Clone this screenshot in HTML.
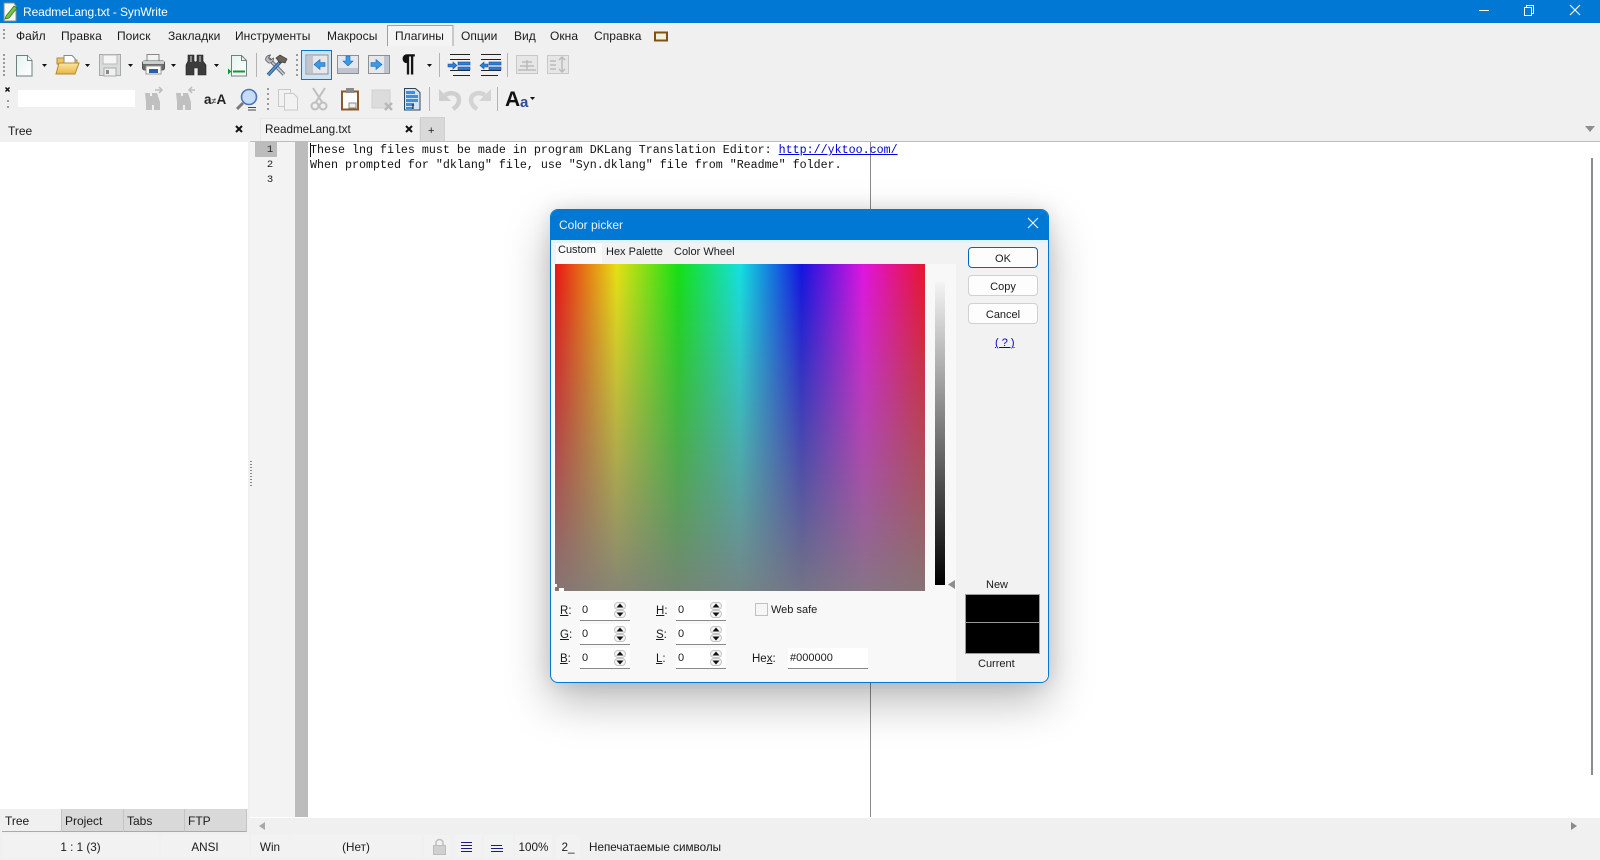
<!DOCTYPE html>
<html><head><meta charset="utf-8"><title>ReadmeLang.txt - SynWrite</title>
<style>
html,body{margin:0;padding:0;width:1600px;height:860px;overflow:hidden;background:#f0f0f0}
body{position:relative;font:12px "Liberation Sans",sans-serif;color:#1a1a1a}
.a{position:absolute;white-space:nowrap}
.b{position:absolute;box-sizing:border-box}
.m{top:29px;line-height:14px;font-size:12px;letter-spacing:.05px}
.ed{position:absolute;left:310px;font:11.67px/15px "Liberation Mono",monospace;color:#111;white-space:pre}
.ln{position:absolute;width:22px;text-align:center;left:259px;font:10.5px/14px "Liberation Mono",monospace;color:#222}
.s{position:absolute;top:835px;height:23px;line-height:25px;background:#f2f2f2;text-align:center;box-sizing:border-box;font-size:11.7px}
.t{position:absolute;top:809px;height:23px;line-height:24px;padding-left:3px;box-sizing:border-box;background:#d9d9d9;border-bottom:1px solid #aaa;border-right:1px solid #c4c4c4}
.fld{position:absolute;width:50px;height:21px;background:#fff;border-bottom:1px solid #8a8a8a;box-sizing:border-box;line-height:21px;padding-left:2px;font-size:11px}
.lb{position:absolute;font-size:11.5px;line-height:14px}
.tx{font-size:11px;line-height:14px}
.btn{position:absolute;left:968px;width:70px;height:21px;border:1px solid #d0d0d0;border-radius:4px;background:#fdfdfd;text-align:center;line-height:22px;box-sizing:border-box;font-size:11px}
u{text-decoration:underline}
</style></head><body>

<!-- title bar -->
<div class="b" style="left:0;top:0;width:1600px;height:23px;background:#0078d4"></div>
<svg class="a" style="left:0;top:0" width="1600" height="860" viewBox="0 0 1600 860" fill="none">
<defs>
<linearGradient id="gd" x1="0" y1="0" x2="1" y2="1"><stop offset="0" stop-color="#e5f3ef"/><stop offset="1" stop-color="#fff"/></linearGradient>
<linearGradient id="fo" x1="0" y1="0" x2="0" y2="1"><stop offset="0" stop-color="#fce8a0"/><stop offset="1" stop-color="#e8b448"/></linearGradient>
</defs>
<!-- app icon -->
<path d="M4 3h10l2 3v15H4z" fill="#fafafa" stroke="#8a8f80"/><path d="M6 16l8-10 3 2-8 10-4 1z" fill="#7cc243" stroke="#2f7a1f" stroke-width=".8"/>
<!-- window controls -->
<path d="M1479 10.500h10" stroke="#fff"/><path d="M1524.500 7.500h7v8h-7z" stroke="#fff"/><path d="M1526.500 7.500v-2h7v8h-2" stroke="#fff"/><path d="M1570 5l10 10M1580 5l-10 10" stroke="#fff" stroke-width="1.100"/>
<!-- grip dots -->
<g fill="#9a9a9a"><rect x="3" y="29" width="2" height="2"/><rect x="3" y="33" width="2" height="2"/><rect x="3" y="37" width="2" height="2"/>
<rect x="3" y="54" width="2" height="2"/><rect x="3" y="58" width="2" height="2"/><rect x="3" y="62" width="2" height="2"/><rect x="3" y="66" width="2" height="2"/><rect x="3" y="70" width="2" height="2"/><rect x="3" y="74" width="2" height="2"/>
<rect x="7" y="100" width="2" height="2"/><rect x="7" y="106" width="2" height="2"/>
<rect x="296" y="54" width="2" height="2"/><rect x="296" y="59" width="2" height="2"/><rect x="296" y="64" width="2" height="2"/><rect x="296" y="69" width="2" height="2"/><rect x="296" y="74" width="2" height="2"/>
<rect x="267" y="88" width="2" height="2"/><rect x="267" y="93" width="2" height="2"/><rect x="267" y="98" width="2" height="2"/><rect x="267" y="103" width="2" height="2"/><rect x="267" y="108" width="2" height="2"/></g>
<!-- menu box -->
<path d="M387.500 46v-20.500h65.500V46" stroke="#a0a0a0" fill="#f4f4f4"/>
<rect x="655" y="32.500" width="12" height="8" stroke="#7a5410" stroke-width="2" fill="#f5efe0"/>
<!-- dropdown arrows -->
<g fill="#111"><path d="M42 64h5l-2.500 3zM85 64h5l-2.500 3zM128 64h5l-2.500 3zM171 64h5l-2.500 3zM214 64h5l-2.500 3zM427 64h5l-2.500 3zM530 97h5l-2.500 3z"/></g>
<!-- new -->
<path d="M16.500 55.500h11l4.500 5v15.500h-15.500z" fill="url(#gd)" stroke="#6c8080"/><path d="M27.500 55.500v5h4.500" stroke="#6c8080" fill="#fff"/>
<!-- open -->
<path d="M57 58h9l2 2h9v4H57z" fill="#efc468" stroke="#b58a2c"/><path d="M64 55.500h8l3 3v8H64z" fill="#fff" stroke="#7a9090"/><path d="M59 63h20l-4 11H56z" fill="url(#fo)" stroke="#b58a2c"/>
<!-- save -->
<path d="M99.500 54.500h21v21h-21z" fill="#d8dcdc" stroke="#a8a8a8"/><rect x="103" y="55" width="14" height="9" fill="#f5f5f5" stroke="#bbb"/><rect x="104" y="68" width="12" height="8" fill="#f0f0f0" stroke="#aaa"/><rect x="106" y="70" width="3" height="4" fill="#888"/>
<!-- print -->
<rect x="147" y="54.500" width="12" height="7" fill="#f2f2f2" stroke="#888"/><rect x="142.500" y="61" width="22" height="9" rx="2" fill="#6a6a6a" stroke="#555"/><rect x="143" y="61" width="21" height="3" fill="#c8d0d0"/><rect x="146" y="66" width="15" height="8" fill="#fff" stroke="#999"/><rect x="149" y="69" width="9" height="4" fill="#2b5fa8"/>
<!-- binoculars -->
<path d="M188 55h6v6l1 1h1l1-1v-6h6v6l3 4v10h-8v-7h-4v7h-8V65l2-4z" fill="#3c3c3c" stroke="#222" stroke-width=".6"/><path d="M190 56h2v6h-2zM199 56h2v6h-2z" fill="#888"/>
<!-- goto doc -->
<path d="M231.500 55.500h10l5 5v15.500h-15z" fill="url(#gd)" stroke="#6c8080"/><path d="M241.500 55.500v5h5" stroke="#6c8080"/><path d="M233 71.500h12" stroke="#0e9a2c" stroke-width="2"/><path d="M228 68.500l3.500 3-3.500 3z" fill="#0e9a2c"/>
<path d="M256.500 53v24M439.500 53v24M507.500 53v24M429.500 87v24M497.500 87v24" stroke="#b4b4b4"/>
<!-- tools -->
<path d="M268.500 58.500l15.500 16" stroke="#5c6670" stroke-width="3.600"/><path d="M268.500 58.500l15.500 16" stroke="#c4c8cc" stroke-width="1.800"/><path d="M265.500 60c0-3 2-5 5-5l-2 3 2 2 3-2c.5 3-2 5.500-5 5z" fill="#b8bcc0" stroke="#555" stroke-width=".7"/>
<path d="M268 75l13-14" stroke="#2f5f98" stroke-width="3.600"/><path d="M268 75l13-14" stroke="#5f94cc" stroke-width="1.600"/><path d="M276 58l4-3 7 4-2 4-3-1-2 1z" fill="#6a6458" stroke="#333" stroke-width=".7"/>
<!-- active button -->
<rect x="301.500" y="50.500" width="30" height="29" fill="#cce4f7" stroke="#0078d4"/>
<!-- panel icons -->
<rect x="306" y="55" width="22" height="19" fill="#e4e8ec" stroke="#8f8f8f"/><rect x="307" y="56" width="6" height="17" fill="#c0c4d0"/><path d="M325 62.500h-5v-3l-6 5 6 5v-3h5z" fill="#3b9ae6" stroke="#1b65b0" stroke-width=".6"/>
<rect x="337.500" y="55.500" width="21" height="18" fill="#e4e8ec" stroke="#8f8f8f"/><rect x="338" y="68" width="20" height="5" fill="#c0c4d0"/><path d="M346 56h4v5h3l-5 5-5-5h3z" fill="#3b9ae6" stroke="#1b65b0" stroke-width=".6"/>
<rect x="368.500" y="55.500" width="21" height="18" fill="#e4e8ec" stroke="#8f8f8f"/><rect x="384" y="56" width="5" height="17" fill="#c0c4d0"/><path d="M371 62.500h5v-3l6 5-6 5v-3h-5z" fill="#3b9ae6" stroke="#1b65b0" stroke-width=".6"/>
<!-- indent -->
<g stroke="#222"><path d="M450 54.500h20M453 75.500h17M450 59.500h20M450 70.500h20"/><path d="M481 54.500h20M481 75.500h17M481 59.500h20M481 70.500h20"/></g>
<g fill="#2f7fd8" stroke="#1a4f9a" stroke-width=".6"><rect x="458" y="62" width="12" height="3"/><rect x="458" y="67" width="12" height="3"/><rect x="489" y="62" width="12" height="3"/><rect x="489" y="67" width="12" height="3"/><path d="M448 64h5v-2l4 3.500-4 3.500v-2h-5zM488 64h-4v-2l-4 3.500 4 3.500v-2h4z"/></g>
<!-- greyed -->
<g stroke="#c8c8c8" fill="#e6e6e6"><rect x="516.500" y="55.500" width="21" height="18"/><rect x="547.500" y="55.500" width="21" height="18"/></g>
<path d="M520 66h14M527 60v10M522 62h10M518 70h18" stroke="#bbb" stroke-width="1.500"/><path d="M550 61h6M550 65h6M550 69h6M562 57v15M559 60l3-3 3 3M559 69l3 3 3-3" stroke="#bbb" stroke-width="1.500"/>
<!-- row2 -->
<path d="M5.500 87.500l4 4M9.500 87.500l-4 4" stroke="#111" stroke-width="1.500"/>
<g fill="#c0c0c0"><path d="M145 93h5v3h2v-3h5l3 9v8h-6v-5h-2v5h-6v-8z"/><path d="M176 93h5v3h2v-3h5l3 9v8h-6v-5h-2v5h-6v-8z"/></g>
<path d="M155 90h6M159 87l3 3-3 3M189 90h6M192 87l-3 3 3 3" stroke="#bdbdbd" stroke-width="1.500"/>
<!-- magnifier -->
<circle cx="249" cy="97" r="7.500" fill="#c6dcf8" stroke="#4c74b4" stroke-width="1.600"/><path d="M243 103l-6 6" stroke="#7a7a7a" stroke-width="3"/><path d="M248 107.500h8M248 110h8" stroke="#444"/>
<!-- copy -->
<g stroke="#c8c8c8" fill="#f2f2f2"><rect x="278.500" y="89.500" width="12" height="17"/><path d="M284.500 93.500h9l4 4v12.500h-13z"/></g>
<!-- cut -->
<g stroke="#bfbfbf" stroke-width="2"><path d="M313 88l9 14M325 88l-9 14"/><circle cx="315" cy="106" r="3.500"/><circle cx="323" cy="106" r="3.500"/></g>
<!-- paste -->
<rect x="342" y="91.500" width="16" height="18" fill="#fff" stroke="#8a5a2a" stroke-width="2"/><rect x="346" y="88" width="8" height="5" fill="#8a8a8a"/><rect x="349" y="103" width="7" height="5" fill="#eee" stroke="#888"/>
<!-- delete -->
<rect x="372" y="90" width="18" height="18" fill="#dcdcdc" stroke="#d0d0d0"/><path d="M385 103l7 7M392 103l-7 7" stroke="#b8b8b8" stroke-width="2.500"/>
<!-- blue doc -->
<path d="M404.500 88.500h11l4.500 4v17.500h-15.500z" fill="#cfe4fa" stroke="#345"/><g fill="#3f8ee0"><rect x="406" y="91" width="9" height="3"/><rect x="406" y="95" width="12" height="3"/><rect x="406" y="99" width="12" height="3"/><rect x="406" y="103" width="8" height="3"/><rect x="406" y="107" width="7" height="2"/></g><path d="M413 104v5" stroke="#111"/>
<!-- undo redo -->
<g id="undo"><path d="M439 89v12h12z" fill="#cfcfcf"/><path d="M445 95c7-4 14-1 14 5 0 4-3 7-6 9" stroke="#cfcfcf" stroke-width="4.500"/></g>
<g transform="translate(930,0) scale(-1,1)"><path d="M439 89v12h12z" fill="#d4d4d4"/><path d="M445 95c7-4 14-1 14 5 0 4-3 7-6 9" stroke="#d4d4d4" stroke-width="4.500"/></g>
<!-- small arrows -->
<path d="M1585 126h10l-5 6z" fill="#8e8e8e"/>
</svg>

<!-- title -->
<div class="a" style="left:23px;top:5px;color:#fff;font-size:12px;line-height:14px;letter-spacing:-.1px">ReadmeLang.txt - SynWrite</div>

<!-- menu -->
<div class="a m" style="left:16px">Файл</div><div class="a m" style="left:61px">Правка</div><div class="a m" style="left:117px">Поиск</div><div class="a m" style="left:168px">Закладки</div><div class="a m" style="left:235px">Инструменты</div><div class="a m" style="left:327px">Макросы</div><div class="a m" style="left:395px">Плагины</div><div class="a m" style="left:461px">Опции</div><div class="a m" style="left:514px">Вид</div><div class="a m" style="left:550px">Окна</div><div class="a m" style="left:594px">Справка</div>

<!-- pilcrow etc -->
<div class="a" style="left:402px;top:51px;font:bold 24px/26px 'Liberation Sans',sans-serif;color:#111;-webkit-text-stroke:.5px #111">¶</div>
<div class="a" style="left:204px;top:92px;font:bold 13.500px/15px 'Liberation Sans',sans-serif;color:#222">a<span style="font-size:9px;font-weight:normal">≠</span>A</div>
<div class="a" style="left:505px;top:89px;font:bold 21px/22px 'Liberation Sans',sans-serif;color:#111">A</div>
<div class="a" style="left:520px;top:94px;font:bold 15px/17px 'Liberation Sans',sans-serif;color:#2b4a9a">a</div>
<div class="b" style="left:18px;top:90px;width:117px;height:17px;background:#fff"></div>

<!-- panel -->
<div class="b" style="left:3px;top:118px;width:245px;height:24px;background:#f0f0f0"></div>
<div class="a" style="left:8px;top:124px;line-height:14px">Tree</div>
<div class="b" style="left:0;top:142px;width:248px;height:667px;background:#fff"></div>

<!-- editor -->
<div class="b" style="left:250px;top:141px;width:1350px;height:677px;background:#fff;border-top:1px solid #bdbdbd"></div>
<div class="b" style="left:250px;top:142px;width:45px;height:675px;background:#f3f3f3"></div>
<div class="b" style="left:295px;top:142px;width:13px;height:675px;background:#bcbcbc"></div>
<div class="b" style="left:255px;top:142px;width:22px;height:15px;background:#bcbcbc"></div>
<div class="ln" style="top:143px">1</div><div class="ln" style="top:158px">2</div><div class="ln" style="top:173px">3</div>
<div class="b" style="left:870px;top:142px;width:1px;height:675px;background:#8a8a8a"></div>
<div class="b" style="left:1591px;top:158px;width:2px;height:617px;background:#8c8c8c"></div>
<div class="b" style="left:310px;top:143px;width:1px;height:14px;background:#111"></div>
<div class="ed" style="top:143px">These lng files must be made in program DKLang Translation Editor: <span style="color:#0000e0;text-decoration:underline">http://yktoo.com/</span>
When prompted for "dklang" file, use "Syn.dklang" file from "Readme" folder.</div>

<!-- tabs -->
<div class="b" style="left:260px;top:118px;width:160px;height:23px;background:#f2f2f2;border:1px solid #e8e8e8;border-bottom:0"></div>
<div class="b" style="left:420px;top:117px;width:25px;height:24px;background:#d9d9d9;border:1px solid #cfcfcf;border-bottom:0"></div>
<div class="a" style="left:265px;top:123px;line-height:14px;font-size:11.7px">ReadmeLang.txt</div>
<div class="a" style="left:428px;top:124px;line-height:14px;font-size:11px">+</div>
<svg class="a" style="left:0;top:0" width="1600" height="860"><path d="M406 126l6 6M412 126l-6 6M236 126l6 6M242 126l-6 6" stroke="#111" stroke-width="2"/></svg>

<!-- grip on splitter -->
<div class="b" style="left:250px;top:461px;width:2px;height:27px;background:repeating-linear-gradient(#888 0 1px,transparent 1px 3px)"></div>

<!-- bottom scrollbar -->
<div class="b" style="left:250px;top:818px;width:1350px;height:17px;background:#f0f0f0"></div>
<svg class="a" style="left:0;top:0" width="1600" height="860"><path d="M265 822v8l-6-4z" fill="#a8a8a8"/><path d="M1571 822v8l6-4z" fill="#8a8a8a"/></svg>

<!-- bottom tabs -->
<div class="t" style="left:2px;width:60px;background:#f0f0f0">Tree</div><div class="t" style="left:62px;width:62px">Project</div><div class="t" style="left:124px;width:61px">Tabs</div><div class="t" style="left:185px;width:62px">FTP</div>

<!-- status -->
<div class="s" style="left:2px;width:157px">1 : 1 (3)</div>
<div class="s" style="left:161px;width:88px">ANSI</div>
<div class="s" style="left:251px;width:38px">Win</div>
<div class="s" style="left:290px;width:132px">(Нет)</div>
<div class="s" style="left:424px;width:26px"></div>
<div class="s" style="left:455px;width:26px"></div>
<div class="s" style="left:484px;width:29px"></div>
<div class="s" style="left:515px;width:37px">100%</div>
<div class="s" style="left:556px;width:24px">2_</div>
<div class="s" style="left:584px;width:1016px;text-align:left;padding-left:5px;background:#f0f0f0">Непечатаемые символы</div>
<svg class="a" style="left:0;top:0" width="1600" height="860" fill="none"><rect x="433.500" y="845.500" width="12" height="9" fill="#d0d0d0" stroke="#bdbdbd"/><path d="M436 845v-2a3.500 3.500 0 017 0v2" stroke="#bdbdbd" stroke-width="1.500"/>
<path d="M461 842.500h11M461 845.500h11M461 848.500h11M461 851.500h11" stroke="#1a1a80"/><path d="M491 845.500h11M491 848.500h12M491 851.500h12" stroke="#1a1a80"/></svg>

<!-- dialog -->
<div class="b" style="left:550px;top:209px;width:499px;height:474px;background:#f8f8f8;border:1px solid #0078d4;border-radius:8px;box-shadow:0 18px 45px rgba(0,0,0,.28),0 0 18px rgba(0,0,0,.1);overflow:hidden">
<div class="b" style="left:0;top:0;width:497px;height:30px;background:#0078d4"></div>
<div class="b" style="left:0;top:30px;width:497px;height:3px;background:#dff2fd"></div>
<div class="b" style="left:0;top:33px;width:497px;height:21px;background:#f2f2f2"></div>
<div class="b" style="left:5px;top:33px;width:46px;height:21px;background:#fafafa"></div>
<div class="b" style="left:405px;top:33px;width:92px;height:440px;background:#f2f2f2"></div>
</div>
<div class="a" style="left:559px;top:218px;color:#eaf5ff;font-size:12px;line-height:14px">Color picker</div>
<svg class="a" style="left:0;top:0" width="1600" height="860" fill="none"><path d="M1028 218l10 10M1038 218l-10 10" stroke="#fff"/><path d="M955 580v9l-7-4.500z" fill="#8e8e8e"/></svg>
<div class="a tx" style="left:558px;top:243px">Custom</div>
<div class="a tx" style="left:606px;top:245px">Hex Palette</div>
<div class="a tx" style="left:674px;top:245px">Color Wheel</div>

<div class="b" style="left:555px;top:264px;width:370px;height:327px;background:linear-gradient(to bottom,rgba(125,125,125,0),rgba(125,125,125,.9)),linear-gradient(to right,#e81414 0,#e6e014 16.67%,#14e014 33.33%,#14e0e0 50%,#1414e0 66.67%,#e014e0 83.33%,#e81430 100%)"></div>
<div class="b" style="left:555px;top:584px;width:2px;height:3px;background:#fff"></div>
<div class="b" style="left:559px;top:588px;width:5px;height:3px;background:#fff"></div>
<div class="b" style="left:935px;top:282px;width:10px;height:303px;background:linear-gradient(#f4f4f4,#777 50%,#000)"></div>

<div class="lb" style="left:560px;top:604px"><u>R</u>:</div><div class="lb" style="left:560px;top:628px"><u>G</u>:</div><div class="lb" style="left:560px;top:652px"><u>B</u>:</div>
<div class="lb" style="left:656px;top:604px"><u>H</u>:</div><div class="lb" style="left:656px;top:628px"><u>S</u>:</div><div class="lb" style="left:656px;top:652px"><u>L</u>:</div>
<div class="fld" style="left:580px;top:600px">0</div><div class="fld" style="left:580px;top:624px">0</div><div class="fld" style="left:580px;top:648px">0</div>
<div class="fld" style="left:676px;top:600px">0</div><div class="fld" style="left:676px;top:624px">0</div><div class="fld" style="left:676px;top:648px">0</div>
<svg class="a" style="left:0;top:0" width="1600" height="860">
<defs><g id="sp"><rect x="614.500" y="602.500" width="11" height="7" rx="3.500" fill="#f4f4f4" stroke="#c4c4c4"/><rect x="614.500" y="610.500" width="11" height="7" rx="3.500" fill="#f4f4f4" stroke="#c4c4c4"/><path d="M616.500 607.500h7l-3.500-4zM616.500 612.500h7l-3.500 4z" fill="#111"/></g></defs>
<use href="#sp"/><use href="#sp" y="24"/><use href="#sp" y="48"/><use href="#sp" x="96"/><use href="#sp" x="96" y="24"/><use href="#sp" x="96" y="48"/>
<rect x="755.500" y="603.500" width="12" height="12" fill="#f6f6f6" stroke="#c0c0c0"/></svg>
<div class="a tx" style="left:771px;top:603px">Web safe</div>
<div class="lb" style="left:752px;top:652px">He<u>x</u>:</div>
<div class="fld" style="left:788px;top:648px;width:80px">#000000</div>
<div class="a tx" style="left:986px;top:578px">New</div>
<div class="b" style="left:965px;top:594px;width:75px;height:60px;background:#000;border:1px solid #9a9a9a"></div>
<div class="b" style="left:966px;top:622px;width:73px;height:1px;background:#9a9a9a"></div>
<div class="a tx" style="left:978px;top:657px">Current</div>
<div class="btn" style="top:247px;border-color:#0067c0">OK</div>
<div class="btn" style="top:275px">Copy</div>
<div class="btn" style="top:303px">Cancel</div>
<div class="a tx" style="left:995px;top:336px;color:#0000d0;text-decoration:underline">( ? )</div>

</body></html>
